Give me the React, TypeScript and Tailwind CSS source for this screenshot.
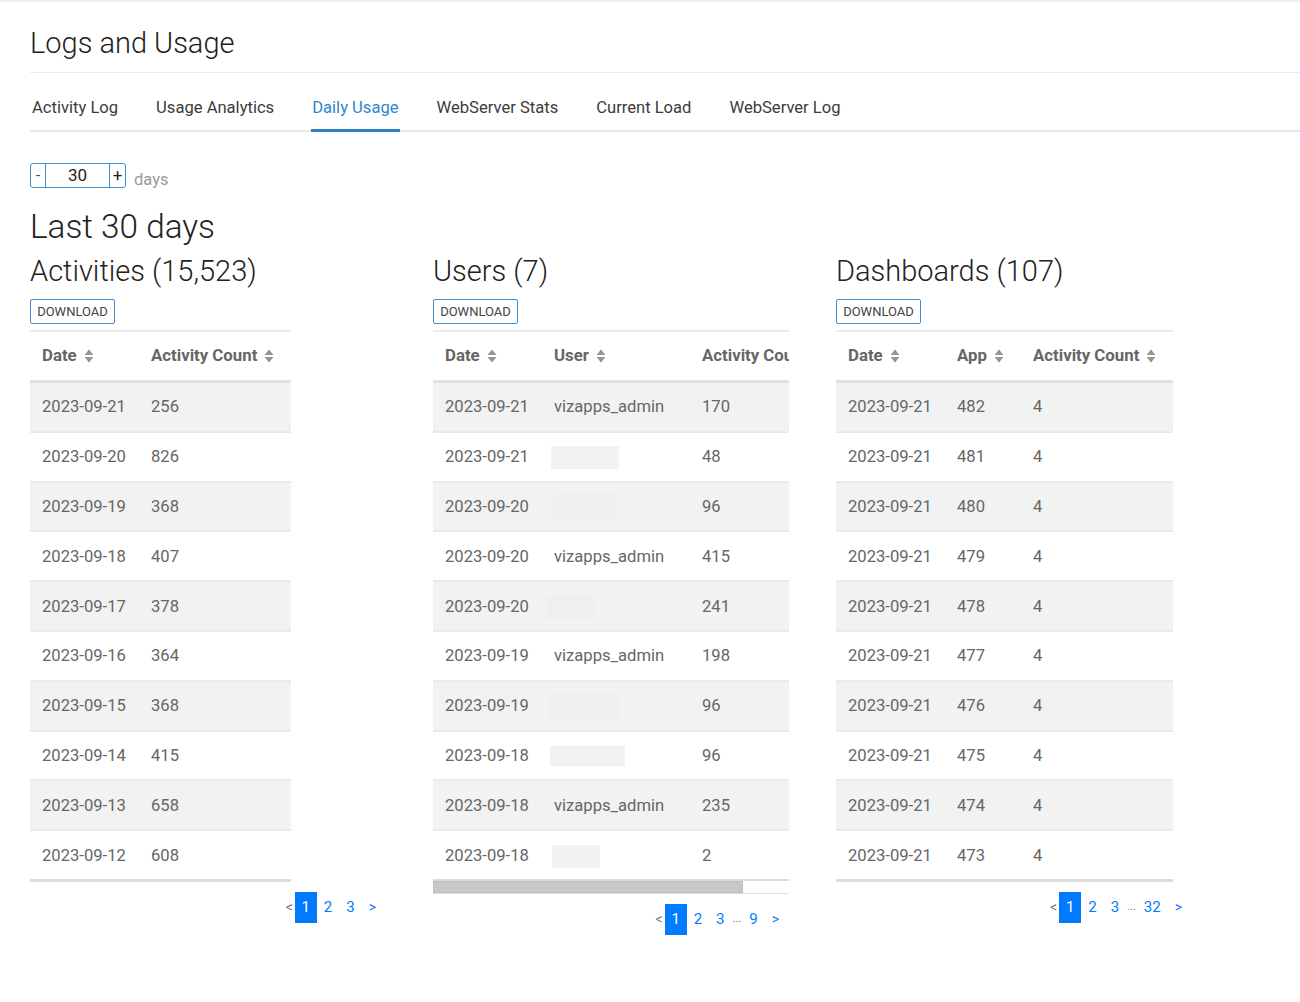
const tabs = ["Activity Log", "Usage Analytics", "Daily Usage", "WebServer Stats", "Current Load", "WebServer Log"];

type Col = { label: string; width: number };
type Cell = string | { blur: string };

const activityRows: Cell[][] = [
  ["2023-09-21", "256"],
  ["2023-09-20", "826"],
  ["2023-09-19", "368"],
  ["2023-09-18", "407"],
  ["2023-09-17", "378"],
  ["2023-09-16", "364"],
  ["2023-09-15", "368"],
  ["2023-09-14", "415"],
  ["2023-09-13", "658"],
  ["2023-09-12", "608"],
];

const userRows: Cell[][] = [
  ["2023-09-21", "vizapps_admin", "170"],
  ["2023-09-21", { blur: "ml-[-3px] h-[23px] w-[68px] bg-[#f1f2f3]" }, "48"],
  ["2023-09-20", { blur: "ml-[-1px] h-[30px] w-[63px] bg-[#eff0f0]" }, "96"],
  ["2023-09-20", "vizapps_admin", "415"],
  ["2023-09-20", { blur: "ml-[-8px] h-[23px] w-[48px] bg-[#eeefef]" }, "241"],
  ["2023-09-19", "vizapps_admin", "198"],
  ["2023-09-19", { blur: "ml-[-4px] h-[26px] w-[68px] bg-[#eeefef]" }, "96"],
  ["2023-09-18", { blur: "ml-[-4px] h-[20px] w-[75px] bg-[#f1f2f3]" }, "96"],
  ["2023-09-18", "vizapps_admin", "235"],
  ["2023-09-18", { blur: "ml-[-2px] h-[23px] w-[48px] bg-[#f1f2f3]" }, "2"],
];

const dashboardRows: Cell[][] = ["482", "481", "480", "479", "478", "477", "476", "475", "474", "473"].map((app) => [
  "2023-09-21",
  app,
  "4",
]);

function SortIcon() {
  return (
    <svg width="10" height="14" viewBox="0 0 10 14" className="ml-[7px] shrink-0" fill="#959595">
      <path d="M5 0.5 9.5 6h-9z" />
      <path d="M5 13.5 0.5 8h9z" />
    </svg>
  );
}

function Pager({ pages }: { pages: string[] }) {
  return (
    <div className="mt-[10px] flex h-[31px] w-[346px] items-center justify-end text-[15px] text-[#007bff]">
      <span className="mr-[2px] text-[14px] text-[#777]">&lt;</span>
      {pages.map((p, i) =>
        p === "..." ? (
          <span key={i} className="mx-[1px] text-[11px] text-[#777]">
            ...
          </span>
        ) : i === 0 ? (
          <span key={i} className="flex h-[31px] w-[22px] items-center justify-center bg-[#007bff] text-white">
            {p}
          </span>
        ) : (
          <span key={i} className="px-[7px]">
            {p}
          </span>
        ),
      )}
      <span className="ml-[7px] text-[14px]">&gt;</span>
    </div>
  );
}

function Section(props: {
  title: string;
  width: number;
  cols: Col[];
  rows: Cell[][];
  pages: string[];
  scroll?: boolean;
}) {
  const { title, width, cols, rows, pages, scroll } = props;
  return (
    <div className="w-[403px] shrink-0">
      <h3 className="h-[41px] text-[29px] leading-[41px] font-light text-[#222]">{title}</h3>
      <button
        type="button"
        className="mt-[7px] block h-[25px] w-[85px] rounded-[2px] border border-[#3f8fd2] text-center text-[13px] leading-[23px] text-[#444]"
      >
        DOWNLOAD
      </button>
      <div className="mt-[6px] overflow-hidden" style={{ width }}>
        <div className="flex h-[50px] items-center border-t-2 border-[#e9ecef] text-[16.8px] font-bold text-[#666]">
          {cols.map((c) => (
            <div key={c.label} className="flex shrink-0 items-center pl-3 whitespace-nowrap" style={{ width: c.width }}>
              {c.label}
              <SortIcon />
            </div>
          ))}
        </div>
        <div className="h-[3px] bg-[#dee2e6]" />
        {rows.map((row, i) => (
          <div
            key={i}
            className={`flex h-[49.8px] items-center border-b-2 pt-[2px] text-[16.6px] text-[#666] ${
              i % 2 === 0 ? "bg-[#f2f2f2]" : "bg-white"
            } ${i === rows.length - 1 ? "border-[#dcdcdc]" : "border-[#e8eaec]"}`}
          >
            {row.map((cell, j) => (
              <div key={j} className="shrink-0 pl-3" style={{ width: cols[j].width }}>
                {typeof cell === "string" ? cell : <div className={cell.blur} />}
              </div>
            ))}
          </div>
        ))}
        {scroll ? (
          <div className="h-[13px] border-b border-[#e0e0e0] bg-white">
            <div className="h-[12px] w-[310px] border border-[#bdbdbd] bg-[#c8c8c8]" />
          </div>
        ) : (
          <div className="h-[1px] bg-[#dcdcdc]" />
        )}
      </div>
      <Pager pages={pages} />
    </div>
  );
}

export default function App() {
  return (
    <div className="min-h-[1002px] overflow-hidden border-t-2 border-[#eeeeee] bg-white pl-[30px] font-['Roboto',sans-serif]">
      <h1 className="flex h-[71px] items-center border-b border-[#e9ecef] pt-[14px] text-[29px] font-light text-[#222]">
        Logs and Usage
      </h1>
      <div className="flex h-[59px] items-stretch border-b-2 border-[#e5e7e9] pl-[1px] text-[16.58px] text-[#3c3c3c]">
        {tabs.map((t) => (
          <div
            key={t}
            className={`-mb-[2px] mr-[36px] flex items-center border-b-[3px] px-[1px] pt-[15px] ${
              t === "Daily Usage" ? "border-[#2f82c8] text-[#2f86cf]" : "border-transparent"
            }`}
          >
            {t}
          </div>
        ))}
      </div>
      <div className="mt-[31px] flex h-[26px] items-start">
        <div className="flex h-[25px] w-[96px] items-center rounded-[3px] border border-[#3f8fd2] text-[17px] text-[#222]">
          <span className="flex h-full w-[15px] items-center justify-center border-r border-[#3f8fd2] text-[15px] text-[#444]">
            -
          </span>
          <span className="flex-1 text-center">30</span>
          <span className="flex h-full w-[16px] items-center justify-center border-l border-[#3f8fd2]">+</span>
        </div>
        <span className="mt-[5px] ml-[8px] text-[16.5px] text-[#999]">days</span>
      </div>
      <h2 className="mt-[16px] h-[44px] text-[33.3px] leading-[44px] font-light text-[#222]">Last 30 days</h2>
      <div className="mt-[2px] flex">
        <Section
          title="Activities (15,523)"
          width={261}
          cols={[
            { label: "Date", width: 109 },
            { label: "Activity Count", width: 152 },
          ]}
          rows={activityRows}
          pages={["1", "2", "3"]}
        />
        <Section
          title="Users (7)"
          width={356}
          cols={[
            { label: "Date", width: 109 },
            { label: "User", width: 148 },
            { label: "Activity Count", width: 160 },
          ]}
          rows={userRows}
          pages={["1", "2", "3", "...", "9"]}
          scroll
        />
        <Section
          title="Dashboards (107)"
          width={337}
          cols={[
            { label: "Date", width: 109 },
            { label: "App", width: 76 },
            { label: "Activity Count", width: 152 },
          ]}
          rows={dashboardRows}
          pages={["1", "2", "3", "...", "32"]}
        />
      </div>
    </div>
  );
}
